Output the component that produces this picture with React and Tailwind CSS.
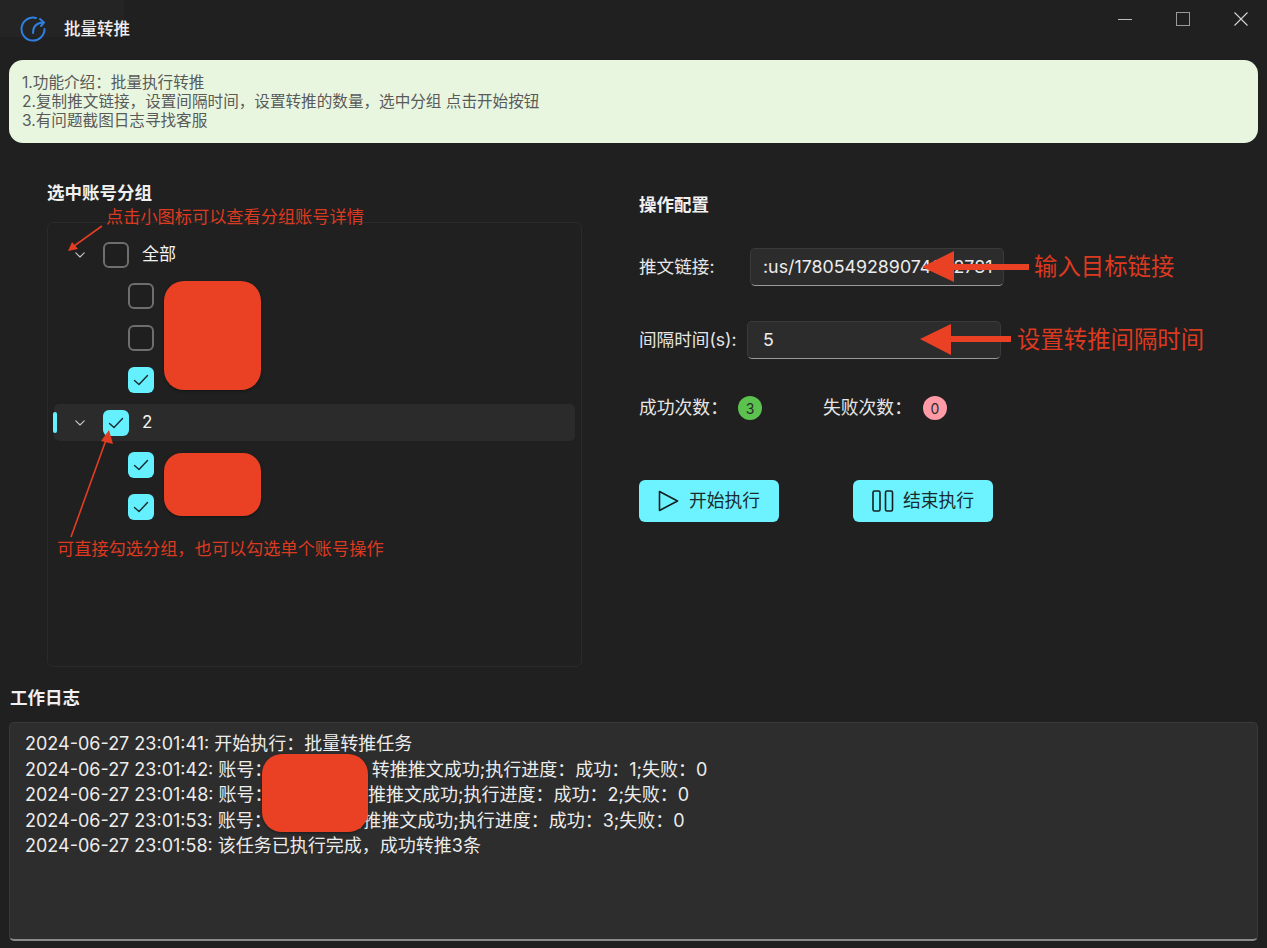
const FONT = { fontFamily: '"Inter","Noto Sans CJK SC",sans-serif' };

function Check({ checked }) {
  return checked ? (
    <span className="flex h-[26px] w-[26px] shrink-0 items-center justify-center rounded-[6px] bg-[#65f0ff]">
      <svg width="16" height="16" viewBox="0 0 16 16" fill="none" stroke="#16292b" strokeWidth="1.4" strokeLinecap="round" strokeLinejoin="round">
        <path d="M1.5 8.6 L6 12.6 L14.5 3.6" />
      </svg>
    </span>
  ) : (
    <span className="block h-[26px] w-[26px] shrink-0 rounded-[6px] border-2 border-[#6e6e6e] bg-[#1f1f1f]" />
  );
}

function Chevron() {
  return (
    <svg width="10" height="6" viewBox="0 0 10 6" fill="none" stroke="#c9c9c9" strokeWidth="1.1" strokeLinecap="round" strokeLinejoin="round">
      <path d="M0.8 0.8 L5 5 L9.2 0.8" />
    </svg>
  );
}

function GroupRow({ label, checked, active }) {
  return (
    <div className={`relative flex h-[37px] w-[521px] items-center rounded-[5px] ${active ? "bg-[#2b2b2b]" : ""}`}>
      {active && <span className="absolute -left-[1px] top-[8px] h-[21px] w-[4px] rounded-[2px] bg-[#65f0ff]" />}
      <span className="ml-[21px] flex w-[10px] justify-center"><Chevron /></span>
      <div className="ml-[18px]"><Check checked={checked} /></div>
      <span className="ml-[13px] text-[17px] leading-none text-[#f2f2f2]">{label}</span>
    </div>
  );
}

function ChildRow({ checked }) {
  return (
    <div className="flex h-[26px] pl-[74px]"><Check checked={checked} /></div>
  );
}

function Field({ label, value, className, gap, pad }) {
  return (
    <div className={`flex items-center ${className}`}>
      <span className={`text-[17.6px] text-[#e6e6e6] ${gap}`}>{label}</span>
      <div className={`flex h-[38px] w-[254px] items-center rounded-[5px] border border-[#3a3a3a] border-b-[#9a9a9a] bg-[#2c2c2c] text-[17.8px] text-[#ececec] ${pad}`}>
        <span className="whitespace-nowrap">{value}</span>
      </div>
    </div>
  );
}

function Badge({ children, className }) {
  return (
    <span className={`flex h-[24px] w-[24px] items-center justify-center rounded-full text-[14px] text-[#2a2a2a] ${className}`}>
      {children}
    </span>
  );
}

function ActionButton({ icon, label }) {
  return (
    <button className="flex h-[42px] w-[140px] items-center justify-center gap-[9px] rounded-[6px] bg-[#6cf3ff] text-[17.8px] text-[#1b2b2d]">
      {icon}
      <span>{label}</span>
    </button>
  );
}

function LogLine({ children }) {
  return <div className="h-[25.5px] whitespace-nowrap leading-[25.5px]">{children}</div>;
}

export default function App() {
  return (
    <div style={FONT} className="relative h-[948px] w-[1267px] overflow-hidden bg-[#202020]">
      {/* title bar */}
      <header className="relative flex h-[60px] items-start">
        <div className="absolute left-0 top-0 h-[37px] w-[124px] bg-[#242424]" />
        <svg className="relative ml-[20px] mt-[16px]" width="28" height="28" viewBox="0 0 28 28" fill="none" stroke="#2f7fe0" strokeWidth="2" strokeLinecap="round" strokeLinejoin="round">
          <path d="M16 2 A11.5 11.5 0 1 0 24.5 13" />
          <path d="M13 17 C13 11 16 7 23 6.5" />
          <path d="M20 3 L24 6.5 L21 10" />
        </svg>
        <span className="relative ml-[16px] mt-[19px] text-[16.5px] font-medium leading-[20px] text-[#efefef]">批量转推</span>
        <div className="ml-auto mr-[19px] mt-[12px] flex items-center gap-[44px]">
          <span className="h-px w-[14px] bg-[#bdbdbd]" />
          <span className="h-[14px] w-[14px] border border-[#9a9a9a]" />
          <svg width="14" height="14" viewBox="0 0 14 14" stroke="#d4d4d4" strokeWidth="1.1"><path d="M0.5 0.5 L13.5 13.5 M13.5 0.5 L0.5 13.5" /></svg>
        </div>
      </header>

      {/* notice */}
      <div className="mx-[9px] h-[83px] rounded-[14px] bg-[#e8f6df] px-[13px] pt-[13px] text-[15.6px] leading-[19px] text-[#5a5a5a]">
        <p>1.功能介绍：批量执行转推</p>
        <p>2.复制推文链接，设置间隔时间，设置转推的数量，选中分组 点击开始按钮</p>
        <p>3.有问题截图日志寻找客服</p>
      </div>

      {/* main */}
      <div className="flex h-[539px]">
        <section className="ml-[47px] w-[535px]">
          <h2 className="mt-[39px] text-[17.5px] font-semibold leading-[22px] text-[#f0f0f0]">选中账号分组</h2>
          <div className="mt-[18px] flex h-[445px] flex-col items-start rounded-[6px] border border-[#2a2a2a] pl-[6px] pt-[13px]">
            <GroupRow label="全部" />
            <div className="mt-[10px] flex flex-col gap-[16px]">
              <ChildRow />
              <ChildRow />
              <ChildRow checked />
            </div>
            <div className="mt-[11px]"><GroupRow label="2" checked active /></div>
            <div className="mt-[11px] flex flex-col gap-[16px]">
              <ChildRow checked />
              <ChildRow checked />
            </div>
          </div>
        </section>

        <section className="ml-[57px] w-[400px]">
          <h2 className="mt-[51px] text-[17.5px] font-semibold leading-[22px] text-[#f0f0f0]">操作配置</h2>
          <Field className="mt-[32px]" gap="w-[111px]" pad="pl-[12px]" label="推文链接:" value=":us/1780549289074092781" />
          <Field className="mt-[35px]" gap="w-[108px]" pad="pl-[15px]" label="间隔时间(s):" value="5" />
          <div className="mt-[37px] flex h-[24px] items-center text-[17.8px] text-[#e6e6e6]">
            <span className="w-[99px]">成功次数：</span>
            <Badge className="bg-[#5cc24f]">3</Badge>
            <span className="ml-[61px] w-[100px]">失败次数：</span>
            <Badge className="bg-[#ff9aa6]">0</Badge>
          </div>
          <div className="mt-[60px] flex gap-[74px]">
            <ActionButton
              label="开始执行"
              icon={
                <svg width="22" height="24" viewBox="0 0 22 24" fill="none" stroke="#14201f" strokeWidth="1.6" strokeLinejoin="round">
                  <path d="M1.5 2.5 L19.5 12 L1.5 21.5 Z" />
                </svg>
              }
            />
            <ActionButton
              label="结束执行"
              icon={
                <svg width="22" height="24" viewBox="0 0 22 24" fill="none" stroke="#14201f" strokeWidth="1.6">
                  <rect x="1" y="2" width="7" height="20" rx="1.5" />
                  <rect x="13.5" y="2" width="7" height="20" rx="1.5" />
                </svg>
              }
            />
          </div>
        </section>
      </div>

      {/* log */}
      <h2 className="ml-[10px] mt-[5px] text-[17.5px] font-semibold leading-[22px] text-[#f0f0f0]">工作日志</h2>
      <div className="mx-[9px] mt-[13px] h-[219px] rounded-[5px] border border-[#3a3a3a] border-b-2 border-b-[#8a8a8a] bg-[#2d2d2d] pl-[15px] pt-[8px] text-[18px] text-[#ececec]">
        <LogLine>2024-06-27 23:01:41: 开始执行：批量转推任务</LogLine>
        <LogLine>2024-06-27 23:01:42: 账号：<span className="inline-block w-[99.5px]" />转推推文成功;执行进度：成功：1;失败：0</LogLine>
        <LogLine>2024-06-27 23:01:48: 账号：<span className="inline-block w-[77.5px]" />转推推文成功;执行进度：成功：2;失败：0</LogLine>
        <LogLine>2024-06-27 23:01:53: 账号：<span className="inline-block w-[73.5px]" />转推推文成功;执行进度：成功：3;失败：0</LogLine>
        <LogLine>2024-06-27 23:01:58: 该任务已执行完成，成功转推3条</LogLine>
      </div>

      {/* redaction blocks laid over the screenshot */}
      <div className="absolute left-[164px] top-[281px] h-[109px] w-[97px] rounded-[20px] bg-[#ea4024] shadow-[0_1px_3px_rgba(0,0,0,0.4)]" />
      <div className="absolute left-[164px] top-[453px] h-[63px] w-[97px] rounded-[18px] bg-[#ea4024] shadow-[0_1px_3px_rgba(0,0,0,0.4)]" />
      <div className="absolute left-[262px] top-[754px] h-[78px] w-[106px] rounded-[20px] bg-[#ea4024] shadow-[0_1px_3px_rgba(0,0,0,0.4)]" />

      {/* hand-drawn annotations over the screenshot */}
      <svg className="pointer-events-none absolute inset-0" width="1267" height="948">
        <line x1="102" y1="226" x2="74" y2="246" stroke="#e23d22" strokeWidth="1.6" />
        <polygon points="68,251 72,242 78,249" fill="#e23d22" />
        <line x1="71" y1="537" x2="106" y2="440" stroke="#e23d22" strokeWidth="1.6" />
        <polygon points="109,430 101,441 113,444" fill="#e23d22" />
        <polygon points="922,267 954,251 954,264 1029,264 1029,270 954,270 954,282" fill="#ea4024" />
        <polygon points="920,339 951,324 951,336 1011,336 1011,342 951,342 951,355" fill="#ea4024" />
      </svg>
      <span className="absolute left-[106px] top-[206px] text-[17.2px] leading-[22px] text-[#dc3a20]">点击小图标可以查看分组账号详情</span>
      <span className="absolute left-[57px] top-[538px] text-[17.2px] leading-[22px] text-[#dc3a20]">可直接勾选分组，也可以勾选单个账号操作</span>
      <span className="absolute left-[1034px] top-[253px] text-[23.4px] leading-[28px] text-[#dc3a20]">输入目标链接</span>
      <span className="absolute left-[1017px] top-[326px] text-[23.4px] leading-[28px] text-[#dc3a20]">设置转推间隔时间</span>
    </div>
  );
}
